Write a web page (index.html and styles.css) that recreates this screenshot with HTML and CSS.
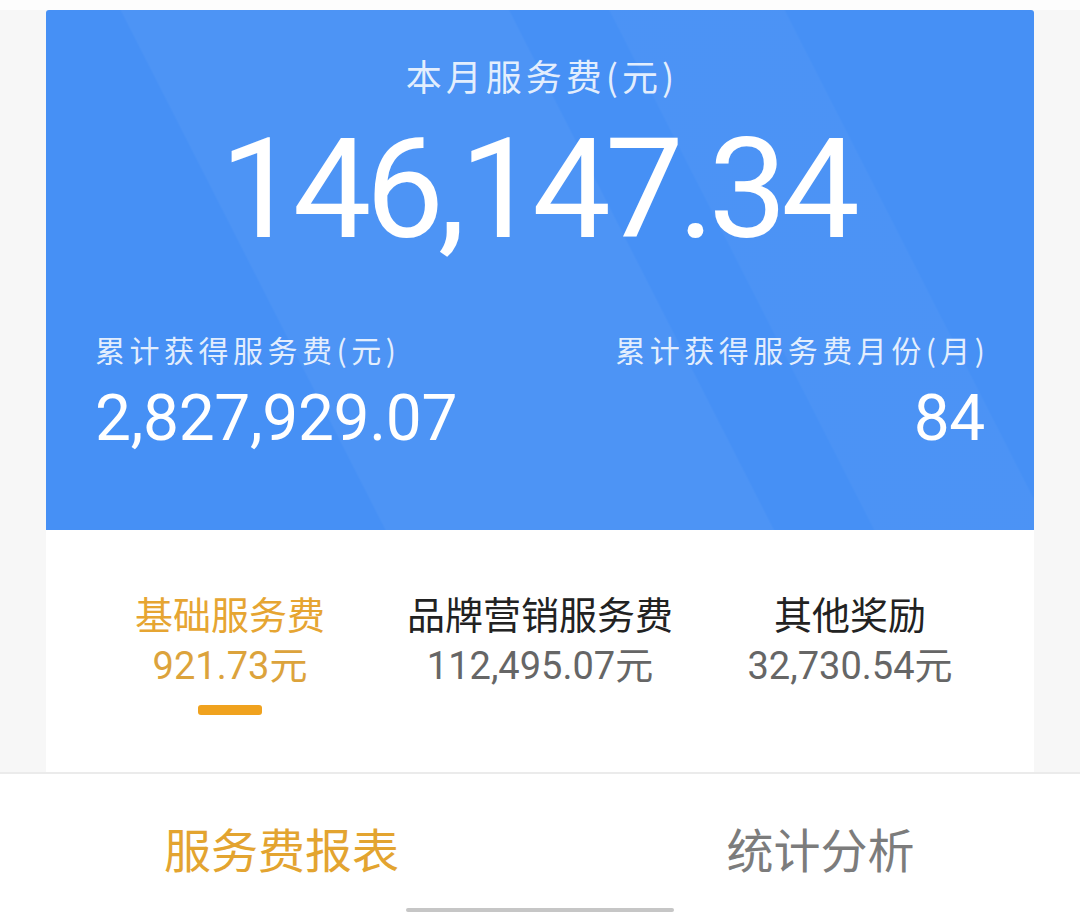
FILE: index.html
```html
<!DOCTYPE html>
<html lang="zh-CN">
<head>
<meta charset="utf-8">
<title>服务费</title>
<link rel="stylesheet" href="styles.css">
</head>
<body>
<div class="top-strip"></div>
<main class="card">
  <section class="hero">
    <div class="hero-title">本月服务费(元)</div>
    <div class="hero-amount">146,147.34</div>
    <div class="hero-stats">
      <div class="stat">
        <div class="stat-label">累计获得服务费(元)</div>
        <div class="stat-value">2,827,929.07</div>
      </div>
      <div class="stat stat-right">
        <div class="stat-label">累计获得服务费月份(月)</div>
        <div class="stat-value">84</div>
      </div>
    </div>
  </section>
  <section class="fee-tabs">
    <div class="fee-tab active">
      <div class="fee-name">基础服务费</div>
      <div class="fee-value">921.73元</div>
      <div class="fee-bar"></div>
    </div>
    <div class="fee-tab">
      <div class="fee-name">品牌营销服务费</div>
      <div class="fee-value">112,495.07元</div>
    </div>
    <div class="fee-tab">
      <div class="fee-name">其他奖励</div>
      <div class="fee-value">32,730.54元</div>
    </div>
  </section>
</main>
<nav class="bottom-tabs">
  <div class="bottom-tab active">服务费报表</div>
  <div class="bottom-tab">统计分析</div>
</nav>
<div class="home-indicator"></div>
</body>
</html>
```
FILE: styles.css
```css
html, body {
  margin: 0;
  padding: 0;
}
body {
  width: 1080px;
  height: 918px;
  overflow: hidden;
  background: #f7f7f7;
  font-family: Roboto, "Noto Sans CJK SC", sans-serif;
}
.top-strip {
  height: 10px;
  background: #fdfdfd;
}
.card {
  margin: 0 46px;
}
.hero {
  height: 520px;
  box-sizing: border-box;
  padding-top: 40px;
  color: #fff;
  background:
    linear-gradient(63deg, rgba(255,255,255,0) 0%, rgba(255,255,255,0) 27%, rgba(255,255,255,0.04) 27.2%, rgba(255,255,255,0.04) 58%, rgba(255,255,255,0) 58.2%),
    linear-gradient(63deg, rgba(255,255,255,0) 66%, rgba(255,255,255,0.03) 66.2%, rgba(255,255,255,0.03) 80%, rgba(255,255,255,0) 80.2%),
    #4690f5;
  border-radius: 3px 3px 0 0;
}
.hero-title {
  text-align: center;
  font-family: "Noto Sans CJK SC", sans-serif;
  font-size: 36px;
  line-height: 50px;
  letter-spacing: 4px;
  padding-left: 4px;
  color: rgba(255,255,255,0.86);
}
.hero-amount {
  text-align: center;
  font-size: 140px;
  line-height: 150px;
  letter-spacing: -6px;
  margin-top: 14px;
  padding-right: 6px;
}
.hero-stats {
  display: flex;
  justify-content: space-between;
  padding: 0 49px;
  margin-top: 65px;
}
.stat-right {
  text-align: right;
}
.stat-label {
  font-family: "Noto Sans CJK SC", sans-serif;
  font-size: 30px;
  line-height: 40px;
  letter-spacing: 4.5px;
  color: rgba(255,255,255,0.86);
}
.stat-right .stat-label {
  margin-right: -4.5px;
}
.stat-value {
  font-size: 64px;
  line-height: 70px;
  letter-spacing: -0.3px;
  margin-top: 15px;
}
.fee-tabs {
  height: 242px;
  box-sizing: border-box;
  background: #fff;
  display: grid;
  grid-template-columns: repeat(3, 310px);
  padding: 59px 29px 0;
}
.fee-tab {
  display: flex;
  flex-direction: column;
  align-items: center;
}
.fee-name {
  font-family: "Noto Sans CJK SC", sans-serif;
  font-size: 38px;
  line-height: 48px;
  color: #222;
}
.fee-value {
  font-family: Roboto, "Noto Sans CJK SC", sans-serif;
  font-size: 38px;
  line-height: 44px;
  letter-spacing: 0;
  color: #666;
  margin-top: 7px;
}
.fee-tab.active .fee-name {
  color: #e6a532;
}
.fee-tab.active .fee-value {
  color: #dca33c;
}
.fee-bar {
  width: 64px;
  height: 10px;
  border-radius: 3px;
  background: #f0a21e;
  margin-top: 17px;
}
.bottom-tabs {
  border-top: 2px solid #ebebeb;
  background: #fff;
  height: 144px;
  display: grid;
  grid-template-columns: 539px 539px;
  padding-left: 12px;
  box-sizing: border-box;
}
.bottom-tab {
  display: flex;
  align-items: center;
  justify-content: center;
  font-family: "Noto Sans CJK SC", sans-serif;
  font-size: 47px;
  color: #7c7c7c;
  padding-top: 4px;
}
.bottom-tab.active {
  color: #e3a430;
}
.home-indicator {
  background: #fff;
  height: 10px;
  position: relative;
}
.home-indicator::after {
  content: "";
  position: absolute;
  left: 406px;
  top: -8px;
  width: 268px;
  height: 4px;
  border-radius: 2px;
  background: #c6c6c6;
}
```
